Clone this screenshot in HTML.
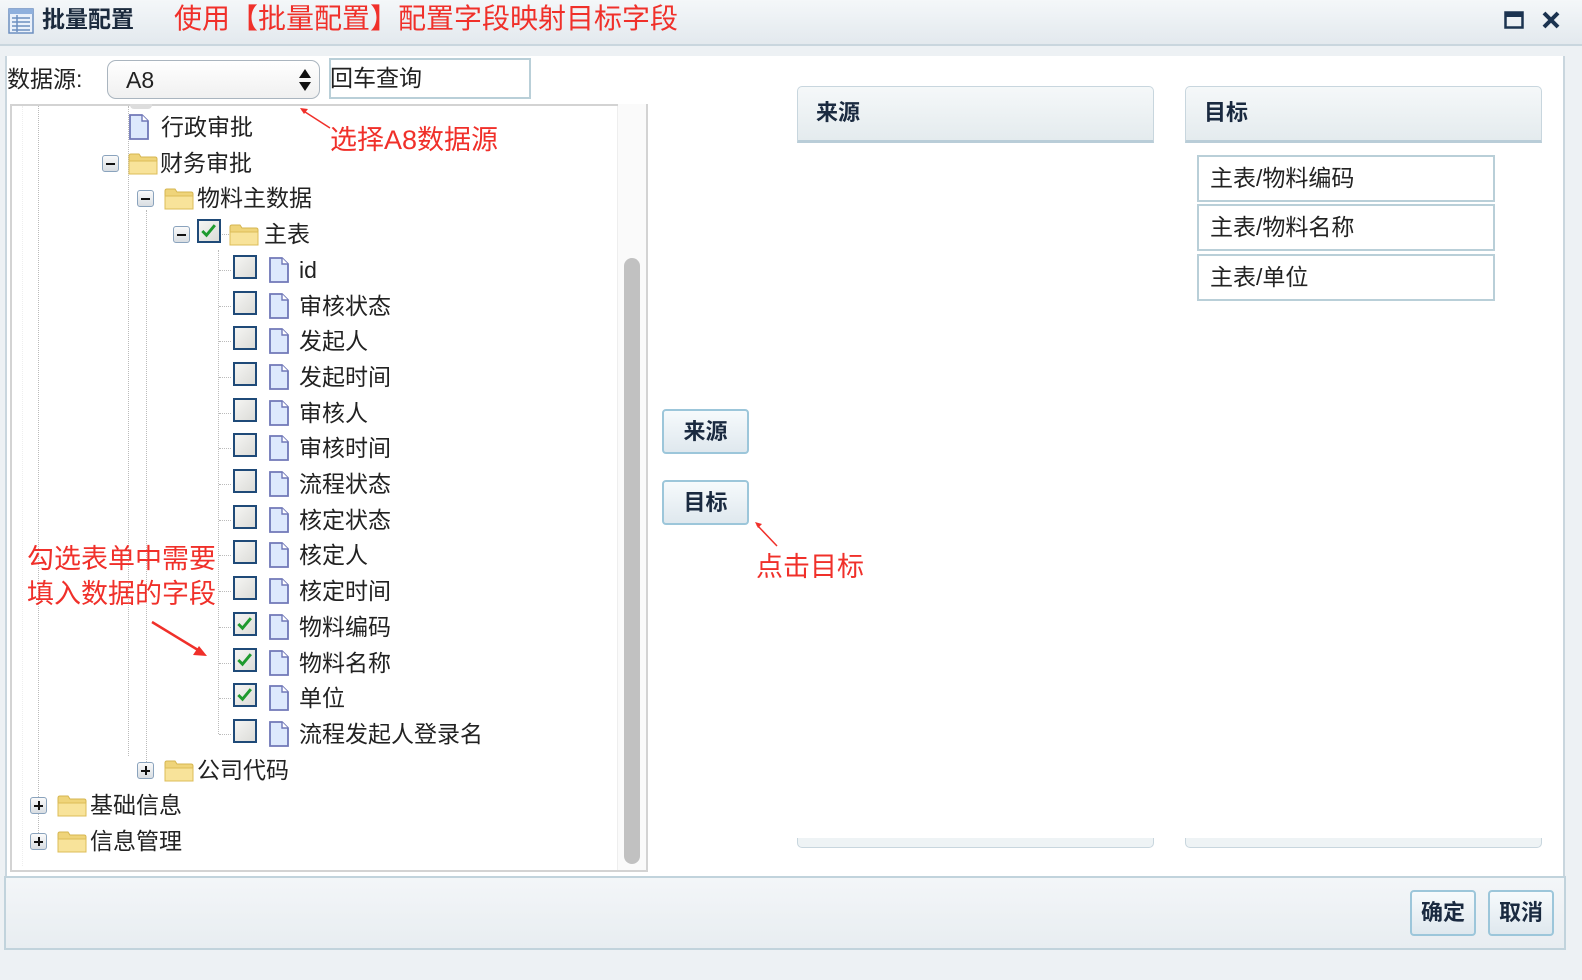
<!DOCTYPE html>
<html><head><meta charset="utf-8">
<style>
*{margin:0;padding:0;box-sizing:border-box}
body{width:1582px;height:980px;background:#edf1f4;position:relative;overflow:hidden;font-family:"Liberation Sans","Noto Sans CJK SC",sans-serif;color:#222}
.a{position:absolute}
.t{position:absolute;font-size:23px;line-height:26px;white-space:nowrap;color:#222}
.red{color:#f0302a}
.exp{position:absolute;width:17px;height:17px;border:1px solid #8aa3bd;border-radius:3px;background:linear-gradient(#fafafa,#d8dde2)}
.exp:before{content:"";position:absolute;left:3px;top:7px;width:9px;height:2px;background:#111}
.exp.p:after{content:"";position:absolute;left:7px;top:3px;width:2px;height:9px;background:#111}
.cb{position:absolute;width:24px;height:24px;border:2px solid #1f4a78;background:linear-gradient(135deg,#f5f5f3,#dcdcd8)}
.doc{position:absolute;width:22px;height:26px}
.fol{position:absolute;width:30px;height:24px}
.vl{position:absolute;border-left:1px dotted #bbb;width:0}
.hl{position:absolute;border-top:1px dotted #bbb;height:0}
.btn{position:absolute;border:2px solid #9cc6da;border-radius:4px;background:linear-gradient(#f6fafc,#dfe8ee);font-weight:bold;font-size:22px;color:#1a2a40;text-align:center}
.hdr{position:absolute;border:1px solid #c8d6de;border-bottom:3px solid #b9cdd8;border-radius:5px 5px 0 0;background:linear-gradient(#f5f8f9,#e4ebee);font-weight:bold;font-size:22px;color:#1a2a40;padding-left:18px;line-height:52px}
.it{position:absolute;border:2px solid #b9cfd8;background:#fff;font-size:23px;line-height:42px;padding-left:11px}
</style></head><body>
<div class="a" style="left:0;top:0;width:1582px;height:46px;background:linear-gradient(#f4f7f9,#e3e9ee);border-bottom:2px solid #c9d6de"></div>
<svg class="a" style="left:8px;top:8px" width="26" height="26" viewBox="0 0 26 26"><rect x="1" y="1" width="24" height="24" fill="#eaf1fb" stroke="#6d8fc0" stroke-width="1.5"/><rect x="1" y="1" width="24" height="5" fill="#8fb0dd"/><g stroke="#6d8fc0" stroke-width="1.5"><line x1="4" y1="10" x2="22" y2="10"/><line x1="4" y1="14" x2="22" y2="14"/><line x1="4" y1="18" x2="22" y2="18"/><line x1="4" y1="22" x2="22" y2="22"/><line x1="9" y1="7" x2="9" y2="24"/></g></svg>
<div class="t" style="left:42px;top:6px;font-weight:bold;color:#1b2a3d">批量配置</div>
<div class="t red" style="left:174px;top:4px;font-size:28px;line-height:30px">使用【批量配置】配置字段映射目标字段</div>
<svg class="a" style="left:1504px;top:11px" width="20" height="18"><rect x="1.5" y="1.5" width="17" height="15" fill="none" stroke="#1b3350" stroke-width="2.5"/><rect x="1" y="1" width="18" height="5" fill="#1b3350"/></svg>
<svg class="a" style="left:1541px;top:10px" width="20" height="20"><path d="M3 3L17 17M17 3L3 17" stroke="#1b3350" stroke-width="4"/></svg>
<div class="a" style="left:5px;top:56px;width:1560px;height:820px;background:#fff;border-right:2px solid #c9d6de;border-left:2px solid #c9d6de"></div>
<div class="t" style="left:7px;top:66px">数据源:</div>
<div class="a" style="left:107px;top:60px;width:213px;height:39px;border:1px solid #aab5bf;border-radius:9px;background:linear-gradient(#fff,#f0f0f0)"></div>
<div class="t" style="left:126px;top:67px">A8</div>
<svg class="a" style="left:298px;top:68px" width="14" height="24"><path d="M7 1L13 10H1Z M7 23L13 14H1Z" fill="#111"/></svg>
<div class="a" style="left:329px;top:58px;width:202px;height:41px;border:2px solid #b9cfd8;background:#fff"></div>
<div class="t" style="left:330px;top:65px">回车查询</div>
<div class="a" style="left:10px;top:104px;width:638px;height:768px;border:2px solid #d3d3d3;border-top:none;background:#fff"></div>
<div class="a" style="left:617px;top:104px;width:29px;height:766px;background:#fafafa;border-left:1px solid #eee"></div>
<div class="a" style="left:624px;top:258px;width:16px;height:606px;background:#c1c1c1;border-radius:8px"></div>
<div class="a" style="left:10px;top:104px;width:608px;height:2px;background:#d3d3d3"></div>
<div class="vl" style="left:38px;top:106px;height:735px"></div>
<div class="vl" style="left:22px;top:106px;height:760px;border-color:#eee"></div>
<div class="vl" style="left:128px;top:106px;height:650px"></div>
<div class="vl" style="left:146px;top:210px;height:560px"></div>
<div class="vl" style="left:218px;top:250px;height:484px"></div>
<div class="a" style="left:130px;top:104px;width:22px;height:5px;background:#ddd;border-radius:0 0 4px 4px"></div>
<svg width="0" height="0" style="position:absolute"><defs>
<symbol id="doc" viewBox="0 0 22 26"><path d="M2 1H14L20 7V25H2Z" fill="#dde9fd" stroke="#7078b8" stroke-width="1.8"/><path d="M14 1V7H20" fill="#fff" stroke="#7078b8" stroke-width="1.4"/></symbol>
<symbol id="fol" viewBox="0 0 30 24"><path d="M1 4Q1 2 3 2H11L13 5H27Q29 5 29 7V22H1Z" fill="#efd47a" stroke="#d6b650"/><path d="M1 9H29V22H1Z" fill="#f8e39a" stroke="#dcbc58"/></symbol>
<symbol id="chk" viewBox="0 0 24 24"><path d="M4 12L9 17L19 5" fill="none" stroke="#1f9a2e" stroke-width="3.5"/></symbol>
</defs></svg>
<div id="tree"></div>
<svg class="a" style="left:0;top:0" width="900" height="700">
<path d="M330 128L302 110" stroke="#f0302a" stroke-width="1.5"/><path d="M300 108l8 1-4 5z" fill="#f0302a"/>
<path d="M152 622L198 650" stroke="#f0302a" stroke-width="2.5"/><path d="M207 656l-14-1 6-9z" fill="#f0302a"/>
<path d="M777 546L757 525" stroke="#f0302a" stroke-width="1.5"/><path d="M755 522l7 2-4 4z" fill="#f0302a"/>
</svg>
<div class="t red" style="left:330px;top:125px;font-size:27px;line-height:30px">选择A8数据源</div>
<div class="t red" style="left:27px;top:542px;font-size:27px;line-height:35px">勾选表单中需要<br>填入数据的字段</div>
<div class="t red" style="left:756px;top:552px;font-size:27px;line-height:30px">点击目标</div>
<div class="btn" style="left:662px;top:409px;width:87px;height:45px;line-height:41px">来源</div>
<div class="btn" style="left:662px;top:480px;width:87px;height:45px;line-height:41px">目标</div>
<div class="hdr" style="left:797px;top:86px;width:357px;height:57px">来源</div>
<div class="hdr" style="left:1185px;top:86px;width:357px;height:57px">目标</div>
<div class="a" style="left:797px;top:838px;width:357px;height:10px;border:1px solid #c8d6de;border-top:none;border-radius:0 0 5px 5px;background:#eef3f5"></div>
<div class="a" style="left:1185px;top:838px;width:357px;height:10px;border:1px solid #c8d6de;border-top:none;border-radius:0 0 5px 5px;background:#eef3f5"></div>
<div class="it" style="left:1197px;top:155px;width:298px;height:47px">主表/物料编码</div>
<div class="it" style="left:1197px;top:204px;width:298px;height:47px">主表/物料名称</div>
<div class="it" style="left:1197px;top:254px;width:298px;height:47px">主表/单位</div>
<div class="a" style="left:4px;top:876px;width:1562px;height:74px;border:2px solid #c1d3dc;background:linear-gradient(#f3f6f8,#e8edf1)"></div>
<div class="btn" style="left:1410px;top:890px;width:66px;height:46px;line-height:42px">确定</div>
<div class="btn" style="left:1488px;top:890px;width:66px;height:46px;line-height:42px">取消</div>
<script>
var rows=[
[0,null,null,'doc',128,161,'行政审批'],
[1,'m',102,'fol',128,160,'财务审批'],
[2,'m',137,'fol',164,197,'物料主数据'],
[3,'m',173,'fol',229,264,'主表','c',197],
];
var f=['id','审核状态','发起人','发起时间','审核人','审核时间','流程状态','核定状态','核定人','核定时间','物料编码','物料名称','单位','流程发起人登录名'];
f.forEach(function(n,i){rows.push([4+i,null,null,'doc',268,299,n,(i>=10&&i<=12)?'c':'u',233]);});
rows.push([18,'p',137,'fol',164,197,'公司代码']);
rows.push([19,'p',30,'fol',57,90,'基础信息']);
rows.push([20,'p',30,'fol',57,90,'信息管理']);
var h='';
rows.forEach(function(r){
 var c=Math.round(127+35.7*r[0]);
 if(r[1]) h+='<div class="exp '+(r[1]=='p'?'p':'')+'" style="left:'+r[2]+'px;top:'+(c-8)+'px"></div>';
 if(r[7]){h+='<div class="hl" style="left:219px;top:'+c+'px;width:12px"></div>';
  h+='<div class="cb" style="left:'+r[8]+'px;top:'+(c-15)+'px">'+(r[7]=='c'?'<svg width="20" height="20"><use href="#chk"/></svg>':'')+'</div>';}
 if(r[3]=='doc') h+='<svg class="doc" style="left:'+r[4]+'px;top:'+(c-13)+'px"><use href="#doc"/></svg>';
 else h+='<svg class="fol" style="left:'+r[4]+'px;top:'+(c-11)+'px"><use href="#fol"/></svg>';
 h+='<div class="t" style="left:'+r[5]+'px;top:'+(c-13)+'px">'+r[6]+'</div>';
});
document.getElementById('tree').innerHTML=h;
</script>
</body></html>
